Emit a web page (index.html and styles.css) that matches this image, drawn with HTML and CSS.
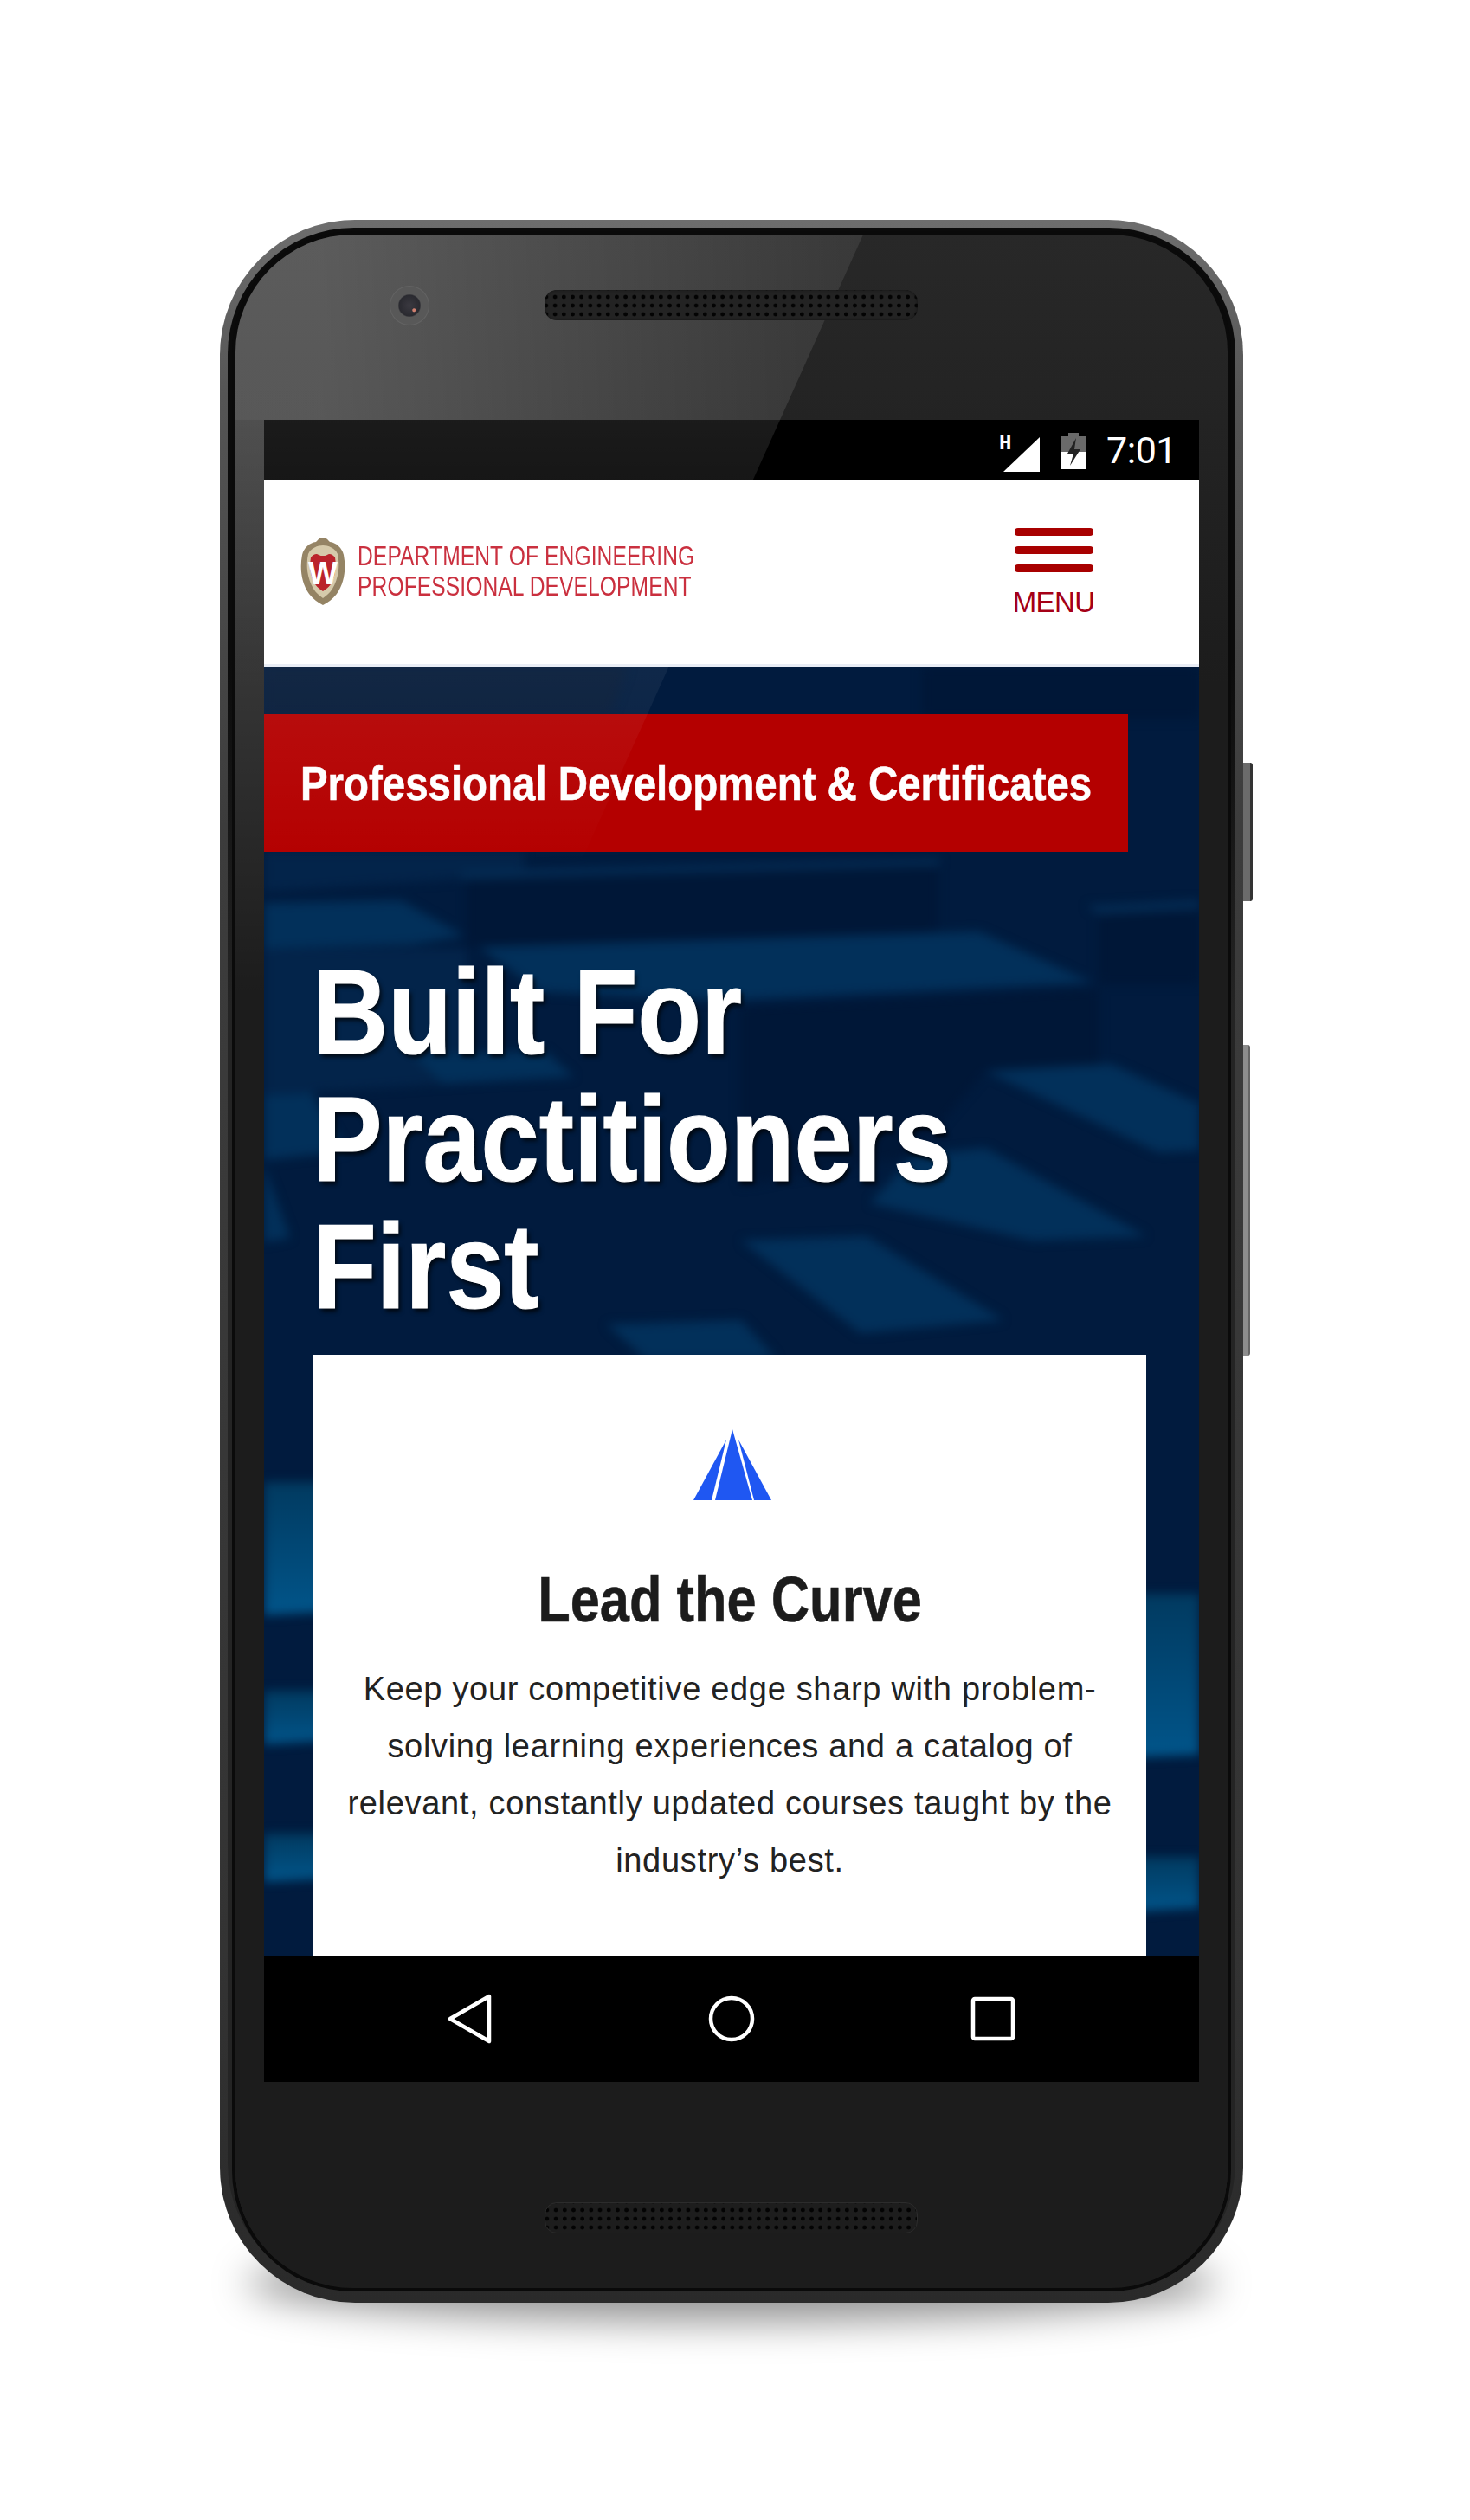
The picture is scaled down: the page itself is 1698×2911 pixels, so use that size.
FILE: index.html
```html
<!DOCTYPE html>
<html lang="en">
<head>
<meta charset="utf-8">
<title>Department of Engineering Professional Development</title>
<link rel="stylesheet" href="styles.css">
</head>
<body>
<div class="phone">
  <div class="btn btn-power"></div>
  <div class="btn btn-volume"></div>
  <div class="bezel">
    <div class="glass">
      <div class="top-bezel">
        <div class="camera"></div>
        <div class="speaker"></div>
      </div>
      <div class="screen">
        <div class="status">
          <svg class="ic-signal" width="50" height="48" viewBox="0 -4 50 48">
            <text class="h-mark" x="0" y="16">H</text>
            <polygon points="5,42 47,2 47,42" fill="#fff"/>
          </svg>
          <svg class="ic-batt" width="28" height="44" viewBox="0 0 28 44">
            <path d="M8 1h12v4h8v18H0V5h8z" fill="#6a6a6a"/>
            <path d="M0 23h28v20H0z" fill="#fff"/>
            <path d="M17 7 7 25h7l-4 14 12-19h-7z" fill="#222"/>
          </svg>
          <span class="clock">7:01</span>
        </div>
        <header class="site-head">
          <div class="logo">
            <svg class="crest" width="52" height="78" viewBox="0 0 52 78">
              <path d="M26 0c4 0 6 3 8 5 8 1 14 7 16 15 3 16 1 32-8 45-5 6-10 10-16 13C20 75 15 71 10 65 1 52-1 36 2 20 4 12 10 6 18 5c2-2 4-5 8-5z" fill="#8c7a58"/>
              <path d="M26 9c6 0 14 3 17 10 3 14 1 28-6 40-3 5-7 8-11 11-4-3-8-6-11-11C8 47 6 33 9 19 12 12 20 9 26 9z" fill="#d3c6a4"/>
              <path d="M12 23c3-4 7-5 9-3 2 1 3 1 5 1s3 0 5-1c2-2 6-1 9 3 2 12 0 22-5 31-3 4-6 6-9 8-3-2-6-4-9-8-5-9-7-19-5-31z" fill="#b5121b"/>
              <text class="crest-w" x="26" y="54" text-anchor="middle">W</text>
            </svg>
            <div class="logo-text">DEPARTMENT OF ENGINEERING<br>PROFESSIONAL DEVELOPMENT</div>
          </div>
          <div class="menu">
            <span class="bar"></span>
            <span class="bar"></span>
            <span class="bar"></span>
            <span class="menu-label">MENU</span>
          </div>
        </header>
        <main class="hero">
          <svg class="hero-bg" width="1080" height="1490" viewBox="0 0 1080 1490">
            <defs>
              <linearGradient id="strip" x1="0" y1="0" x2="0" y2="1">
                <stop offset="0" stop-color="#013a60"/>
                <stop offset="1" stop-color="#01558a"/>
              </linearGradient>
            </defs>
            <g class="blur-soft">
              <polygon class="top-left" points="0,0 420,0 400,55 0,55"/>
              <polygon class="mid" points="0,214 300,214 300,240 0,260"/>
              <polygon class="dark" points="234,240 778,230 778,306 234,324"/>
              <polygon class="dark" points="964,286 1080,281 1080,367 964,367"/>
              <polygon class="dark" points="550,393 964,372 964,464 833,467 750,565 550,600"/>
              <polygon class="dark" points="760,0 1080,0 1080,60 760,60"/>
              <polygon class="mid" points="0,326 234,326 234,480 0,495"/>
              <polygon class="faint" points="228,236 780,222 780,230 228,246"/>
              <polygon class="faint" points="950,276 1080,270 1080,280 964,286"/>
              <polygon class="light" points="0,273 158,270 231,311 172,321 0,326"/>
              <polygon class="light" points="248,324 826,306 957,365 530,386 320,376"/>
              <polygon class="light" points="172,449 324,444 358,474 207,482"/>
              <polygon class="light" points="0,495 55,492 95,560 0,570"/>
              <polygon class="light" points="0,577 30,660 0,665"/>
              <polygon class="light" points="833,467 978,459 1080,505 1080,559 1033,561"/>
              <polygon class="light" points="750,565 833,556 1019,658 888,663 700,620"/>
              <polygon class="light" points="551,663 696,658 854,755 689,770"/>
              <polygon class="light" points="396,760 551,755 592,800 441,800"/>
              <polygon fill="url(#strip)" points="0,942 70,942 70,1092 0,1096"/>
              <polygon fill="url(#strip)" points="0,1183 70,1183 70,1241 0,1245"/>
              <polygon fill="url(#strip)" points="0,1348 70,1348 70,1400 0,1404"/>
              <polygon fill="url(#strip)" points="1005,1071 1080,1071 1080,1257 1005,1260"/>
              <polygon fill="url(#strip)" points="1005,1375 1080,1375 1080,1434 1005,1438"/>
            </g>
          </svg>
          <div class="banner"><span class="banner-text">Professional Development &amp; Certificates</span></div>
          <h1 class="title">Built For<br>Practitioners<br>First</h1>
          <section class="card">
            <svg class="curve-icon" width="90" height="82" viewBox="0 0 90 82">
              <polygon points="45,0 68,82 25,82" fill="#1f57f2"/>
              <polygon points="38,12 21,82 0,82" fill="#1f57f2"/>
              <polygon points="52,12 70,82 90,82" fill="#1f57f2"/>
            </svg>
            <h2 class="card-title">Lead the Curve</h2>
            <p class="card-text">Keep your competitive edge sharp with problem-solving learning experiences and a catalog of relevant, constantly updated courses taught by the industry’s best.</p>
          </section>
        </main>
        <nav class="android-nav">
          <svg width="60" height="64" viewBox="0 0 60 64"><path d="M52 6 7 32l45 26z" class="nav-stroke"/></svg>
          <svg width="60" height="64" viewBox="0 0 60 64"><circle cx="30" cy="32" r="24" class="nav-stroke"/></svg>
          <svg width="60" height="64" viewBox="0 0 60 64"><rect x="7" y="9" width="46" height="46" rx="2" class="nav-stroke"/></svg>
        </nav>
      </div>
      <div class="bottom-bezel">
        <div class="speaker speaker-low"></div>
      </div>
      <svg class="glare" width="1146" height="900" viewBox="0 0 1146 900">
        <defs>
          <linearGradient id="glareTop" gradientUnits="userSpaceOnUse" x1="100" y1="0" x2="720" y2="0">
            <stop offset="0" stop-color="#fff" stop-opacity=".24"/>
            <stop offset="1" stop-color="#fff" stop-opacity=".08"/>
          </linearGradient>
          <linearGradient id="glareLow" gradientUnits="userSpaceOnUse" x1="0" y1="214" x2="0" y2="729">
            <stop offset="0" stop-color="#fff" stop-opacity=".105"/>
            <stop offset=".12" stop-color="#fff" stop-opacity=".09"/>
            <stop offset=".65" stop-color="#fff" stop-opacity=".05"/>
            <stop offset="1" stop-color="#fff" stop-opacity="0"/>
          </linearGradient>
          <linearGradient id="glareSide" gradientUnits="userSpaceOnUse" x1="0" y1="214" x2="0" y2="880">
            <stop offset="0" stop-color="#fff" stop-opacity=".2"/>
            <stop offset="1" stop-color="#fff" stop-opacity="0"/>
          </linearGradient>
        </defs>
        <polygon points="0,0 725,0 629,214 0,214" fill="url(#glareTop)"/>
        <polygon points="33,214 629,214 397,729 33,729" fill="url(#glareLow)"/>
        <polygon points="0,214 33,214 33,880 0,880" fill="url(#glareSide)"/>
      </svg>
    </div>
  </div>
</div>
</body>
</html>
```

FILE: styles.css
```css
* { box-sizing: border-box; }
html { margin: 0; padding: 0; background: #fff; }
body { margin: 0; width: 1698px; height: 2911px; overflow: hidden; padding: 254px 0 0 254px; }

.phone {
  position: relative;
  width: 1182px;
  height: 2406px;
  padding: 9px 9px 15px;
  border-radius: 156px;
  background: linear-gradient(180deg, #6e6e6e 0, #555 200px, #3c3c3c 700px, #333 2000px, #2a2a2a 2406px);
}
.phone::before {
  content: "";
  position: absolute;
  z-index: -1;
  left: 30px;
  right: 30px;
  bottom: -22px;
  height: 90px;
  border-radius: 50%;
  background: rgba(0, 0, 0, .42);
  filter: blur(22px);
}
.btn { position: absolute; left: 100%; }
.btn-power {
  top: 627px; width: 11px; height: 160px;
  background: #6b6b6b;
  border-right: 3px solid #333;
  border-radius: 0 3px 3px 0;
}
.btn-volume {
  top: 953px; width: 8px; height: 359px;
  background: #8d8d8d;
  border-right: 2px solid #666;
  border-radius: 0 3px 3px 0;
}
.bezel {
  position: relative;
  height: 100%;
  padding: 8px 9px 2px;
  border-radius: 146px;
  background: linear-gradient(180deg, #0b0b0b 0, #0b0b0b 500px, #242424 900px, #242424 2300px, #0b0b0b 2382px);
}
.glass {
  position: relative;
  height: 100%;
  overflow: hidden;
  border-radius: 136px;
  background: linear-gradient(180deg, #282828 0, #1c1c1c 520px);
  box-shadow: 0 0 0 4px #0a0a0a;
}
.top-bezel {
  display: grid;
  grid-template-columns: 357px 431px;
  height: 214px;
  padding-top: 64px;
}
.camera {
  position: relative;
  z-index: 2;
  width: 46px; height: 46px;
  margin: -5px 0 0 178px;
  border-radius: 50%;
  border: 1px solid rgba(255, 255, 255, .07);
  background:
    radial-gradient(circle at 62% 62%, #d0806f 0, #d0806f 1.5px, transparent 2.5px),
    radial-gradient(circle, #3a3940 0, #2a2a30 12px, transparent 13.5px),
    #585858;
}
.speaker {
  position: relative;
  z-index: 2;
  width: 431px; height: 35px;
  border-radius: 14px;
  background-color: #232323;
  background-image: radial-gradient(circle, #030303 0, #030303 2px, transparent 2.8px);
  background-size: 10.2px 10px;
  background-position: 7px 3px;
  box-shadow: inset 0 0 3px #111;
}
.speaker-low {
  height: 36px;
  background-color: #1d1d1d;
  border: 1px solid #2c2c2c;
  box-shadow: none;
}
.bottom-bezel { padding: 139px 0 0 357px; }

.screen {
  position: relative;
  width: 1080px;
  height: 1920px;
  margin-left: 33px;
  display: flex;
  flex-direction: column;
  overflow: hidden;
}
.status {
  flex: none;
  height: 69px;
  display: flex;
  align-items: center;
  justify-content: flex-end;
  gap: 24px;
  padding: 0 26px 0 0;
  background: #000;
}
.ic-signal { margin-top: 7px; margin-right: -2px; }
.ic-batt { margin-top: 3px; }
.h-mark { font: 700 24px "Liberation Mono", monospace; fill: #fff; }
.clock { font: 400 43px Roboto, sans-serif; color: #fff; letter-spacing: -.5px; margin-top: 1px; }

.site-head {
  flex: none;
  height: 216px;
  display: flex;
  align-items: center;
  justify-content: space-between;
  padding: 0 122px 0 42px;
  background: #fff;
  border-bottom: 3px solid #e9edf5;
}
.logo { display: flex; align-items: center; gap: 14px; margin-top: -1px; }
.crest-w { font: 700 36px "Liberation Sans", sans-serif; fill: #fff; }
.logo-text {
  font: 400 32px/35px "Liberation Sans", sans-serif;
  letter-spacing: .1px;
  color: #c62030;
  white-space: nowrap;
  transform: scaleX(.77);
  transform-origin: left center;
  filter: blur(.6px);
}
.menu { display: flex; flex-direction: column; align-items: center; gap: 12px; width: 92px; margin-top: 4px; }
.bar { display: block; width: 91px; height: 9px; border-radius: 4px; background: #a80000; }
.menu-label {
  font: 400 33px/38px "Liberation Sans", sans-serif;
  letter-spacing: -.6px;
  color: #a50016;
  white-space: nowrap;
  margin-top: 4px;
}

.hero {
  position: relative;
  flex: none;
  height: 1489px;
  overflow: hidden;
  background: #011b3e;
  padding-top: 55px;
}
.hero-bg { position: absolute; left: 0; top: 0; }
.blur-soft { filter: blur(6px); }
.top-left { fill: #041a38; }
.mid { fill: #03244a; }
.dark { fill: #001737; }
.faint { fill: #042c54; }
.light { fill: #02305a; }

.banner {
  position: relative;
  width: 998px;
  height: 159px;
  display: flex;
  align-items: center;
  padding-left: 42px;
  background: #b40000;
}
.banner-text {
  flex: none;
  color: #fff;
  font: 700 55px "Liberation Sans", sans-serif;
  -webkit-text-stroke: .6px #fff;
  white-space: nowrap;
  transform: scaleX(.862);
  transform-origin: left center;
}
.title {
  position: relative;
  margin: 111px 0 29px 56px;
  font: 700 140px/147px "Liberation Sans", sans-serif;
  color: #fff;
  -webkit-text-stroke: 1.2px #fff;
  text-shadow: 3px 4px 6px rgba(0, 0, 0, .75);
  transform: scaleX(.862);
  transform-origin: left center;
}
.card {
  position: relative;
  width: 962px;
  min-height: 760px;
  margin-left: 57px;
  padding: 86px 30px 0;
  background: #fff;
  text-align: center;
}
.curve-icon { display: block; margin: 0 auto; position: relative; left: 3px; }
.card-title {
  margin: 75px 0 30px;
  font: 700 74px/80px "Liberation Sans", sans-serif;
  color: #1c1c1c;
  -webkit-text-stroke: .5px #1c1c1c;
  transform: scaleX(.83);
}
.card-text {
  margin: 0;
  font: 400 38px/66px "Liberation Sans", sans-serif;
  letter-spacing: .68px;
  color: #222;
}

.android-nav {
  flex: none;
  height: 146px;
  display: flex;
  align-items: center;
  justify-content: center;
  gap: 242px;
  background: #000;
}
.nav-stroke { fill: none; stroke: #fff; stroke-width: 4.5; stroke-linejoin: round; }

.glare { position: absolute; z-index: 1; left: 0; top: 0; pointer-events: none; }
```
